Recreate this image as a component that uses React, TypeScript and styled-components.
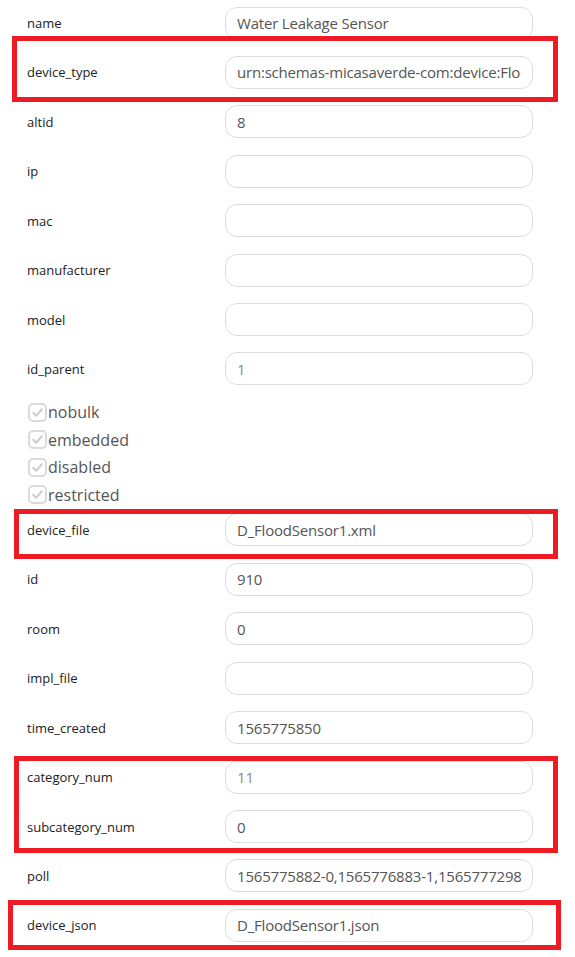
import styled, { createGlobalStyle } from 'styled-components';

const GlobalStyle = createGlobalStyle`
  body {
    margin: 0;
    background: #fff;
    font-family: "Open Sans", "Noto Sans", sans-serif;
  }
`;

const ROW_H = 49.43;

// whole form column
const Form = styled.div`
  display: flex;
  flex-direction: column;
  margin-top: -1.7px;
`;

// label + input pair
const Row = styled.div`
  display: grid;
  grid-template-columns: 198px 308px;
  align-items: center;
  height: ${ROW_H}px;
  padding-left: 27px;
`;

const Label = styled.label`
  font-size: 13px;
  color: #222;
`;

const Field = styled.input<{ $muted?: boolean }>`
  box-sizing: border-box;
  width: 308px;
  height: 33px;
  padding: 0 11px;
  border: 1px solid #dcdcdc;
  border-radius: 12px;
  background: #fff;
  font-family: "Open Sans", "Noto Sans", sans-serif;
  font-size: 15px;
  letter-spacing: -0.2px;
  color: ${({ $muted }) => ($muted ? '#8a8a8a' : '#555')};
  outline: none;
`;

// annotation frame drawn over a group of rows
const Highlight = styled.div<{ $t: number; $b: number; $l: number; $r: number }>`
  position: relative;
  display: flex;
  flex-direction: column;

  &::after {
    content: '';
    position: absolute;
    top: ${({ $t }) => $t}px;
    bottom: ${({ $b }) => $b}px;
    left: ${({ $l }) => $l}px;
    right: ${({ $r }) => $r}px;
    border: 5px solid #ed1c24;
    pointer-events: none;
  }
`;

const Checks = styled.div`
  box-sizing: border-box;
  height: 111.6px;
  padding: 5px 0 0 28px;
  display: flex;
  flex-direction: column;
`;

const CheckItem = styled.div`
  display: flex;
  align-items: center;
  height: 27.5px;
  flex-shrink: 0;
  font-size: 16px;
  color: #555;
`;

const Box = styled.span`
  box-sizing: border-box;
  width: 19px;
  height: 19px;
  margin-right: 1px;
  border: 2px solid #dadada;
  border-radius: 5px;
  display: flex;
  align-items: center;
  justify-content: center;
`;

const Tick = () => (
  <svg width="13" height="13" viewBox="0 0 12 12" aria-hidden="true">
    <path d="M2 6.3 L4.8 9 L10 3" fill="none" stroke="#cccccc" strokeWidth="1.8" strokeLinecap="round" strokeLinejoin="round" />
  </svg>
);

type F = { name: string; value: string; muted?: boolean };

const FieldRow = ({ name, value, muted }: F) => (
  <Row>
    <Label>{name}</Label>
    <Field readOnly value={value} $muted={muted} />
  </Row>
);

export default function App() {
  return (
    <>
      <GlobalStyle />
      <Form>
        <FieldRow name="name" value="Water Leakage Sensor" />
        <Highlight $t={-12} $b={-5} $l={12} $r={17}>
          <FieldRow name="device_type" value="urn:schemas-micasaverde-com:device:FloodSensor:1" />
        </Highlight>
        <FieldRow name="altid" value="8" />
        <FieldRow name="ip" value="" />
        <FieldRow name="mac" value="" />
        <FieldRow name="manufacturer" value="" />
        <FieldRow name="model" value="" />
        <FieldRow name="id_parent" value="1" muted />
        <Checks>
          {['nobulk', 'embedded', 'disabled', 'restricted'].map((c) => (
            <CheckItem key={c}>
              <Box>
                <Tick />
              </Box>
              {c}
            </CheckItem>
          ))}
        </Checks>
        <Highlight $t={4} $b={-4} $l={14} $r={17}>
          <FieldRow name="device_file" value="D_FloodSensor1.xml" />
        </Highlight>
        <FieldRow name="id" value="910" />
        <FieldRow name="room" value="0" />
        <FieldRow name="impl_file" value="" />
        <FieldRow name="time_created" value="1565775850" />
        <Highlight $t={4} $b={-2} $l={14} $r={17}>
          <FieldRow name="category_num" value="11" muted />
          <FieldRow name="subcategory_num" value="0" />
        </Highlight>
        <FieldRow name="poll" value="1565775882-0,1565776883-1,1565777298-0" />
        <Highlight $t={-1} $b={0} $l={8} $r={14}>
          <FieldRow name="device_json" value="D_FloodSensor1.json" />
        </Highlight>
      </Form>
    </>
  );
}
